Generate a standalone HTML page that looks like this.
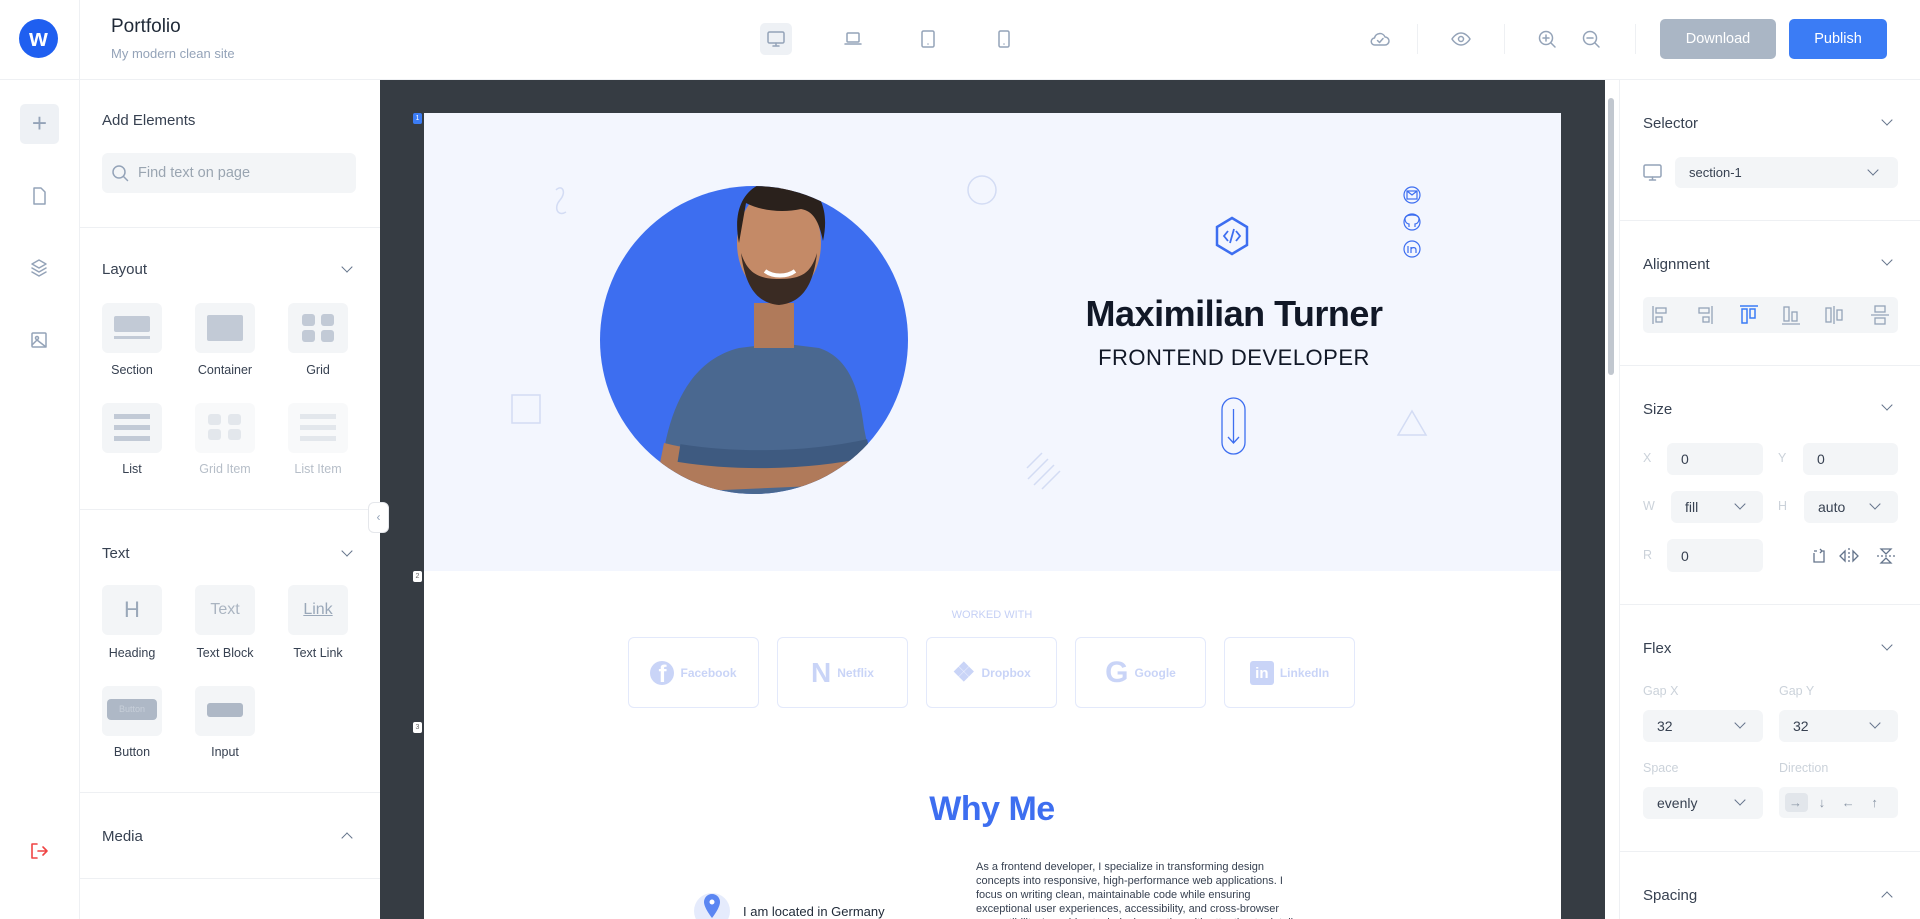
<!DOCTYPE html>
<html><head><meta charset="utf-8"><style>
*{box-sizing:border-box;margin:0;padding:0}
body{width:1920px;height:919px;overflow:hidden;background:#fff;font-family:"Liberation Sans",sans-serif;color:#1f2937;position:relative}
.a{position:absolute}
.ic{fill:none;stroke:#94a3b8;stroke-width:1.5;stroke-linecap:round;stroke-linejoin:round}
.h{font-size:15px;color:#374151}
.tile{position:absolute;width:60px;height:50px;background:#f3f5f7;border-radius:6px}
.lbl{position:absolute;width:90px;text-align:center;font-size:12.5px;color:#374151}
.sep{position:absolute;height:1px;background:#eef0f3}
.box{position:absolute;background:#f3f5f7;border-radius:6px;font-size:14px;color:#374151;padding-left:14px;display:flex;align-items:center}
.chev{position:absolute;width:8px;height:8px;border-right:1.5px solid #64748b;border-bottom:1.5px solid #64748b;transform:rotate(45deg)}
.chevu{position:absolute;width:8px;height:8px;border-left:1.5px solid #64748b;border-top:1.5px solid #64748b;transform:rotate(45deg)}
.fl{position:absolute;font-size:12.5px;color:#cbd2da}
.card{position:absolute;top:524px;width:131px;height:71px;border:1px solid #e3e9fb;border-radius:6px;display:flex;align-items:center;justify-content:center;gap:6px;color:#c9d4f7;font-size:12px;font-weight:bold}
</style></head><body>

<!-- header -->
<div class="a" style="left:0;top:79px;width:1920px;height:1px;background:#eef0f3"></div>
<div class="a" style="left:79px;top:0;width:1px;height:919px;background:#eef0f3"></div>
<div class="a" style="left:19px;top:19px;width:39px;height:39px;border-radius:50%;background:#1f5ff0;color:#fff;font-weight:bold;font-size:24px;text-align:center;line-height:39px">w</div>
<div class="a" style="left:111px;top:16px;font-size:19px;color:#1f2937">Portfolio</div>
<div class="a" style="left:111px;top:46px;font-size:13px;color:#94a3b8">My modern clean site</div>
<div class="a" style="left:760px;top:23px;width:32px;height:32px;background:#eef1f5;border-radius:5px"></div>
<svg class="a" style="left:766px;top:29px" width="20" height="20" viewBox="0 0 20 20"><rect class="ic" x="2" y="3" width="16" height="11" rx="1.5"/><path class="ic" d="M10 14v3M7 17h6"/></svg>
<svg class="a" style="left:843px;top:29px" width="20" height="20" viewBox="0 0 20 20"><rect class="ic" x="4" y="4" width="12" height="9" rx="1"/><path class="ic" d="M2 15h16"/></svg>
<svg class="a" style="left:918px;top:29px" width="20" height="20" viewBox="0 0 20 20"><rect class="ic" x="4" y="2" width="12" height="16" rx="1.5"/><path class="ic" d="M10 15h.01"/></svg>
<svg class="a" style="left:994px;top:29px" width="20" height="20" viewBox="0 0 20 20"><rect class="ic" x="5" y="2" width="10" height="16" rx="1.5"/><path class="ic" d="M10 15h.01"/></svg>
<svg class="a" style="left:1369px;top:28px" width="22" height="22" viewBox="0 0 22 22"><path class="ic" d="M6 17h10a4 4 0 0 0 0-8 5.5 5.5 0 0 0-10.5 1A3.5 3.5 0 0 0 6 17z"/><path class="ic" d="M8.5 12.5l2 2 3.5-4"/></svg>
<div class="a" style="left:1417px;top:24px;width:1px;height:30px;background:#eef0f3"></div>
<svg class="a" style="left:1450px;top:28px" width="22" height="22" viewBox="0 0 22 22"><path class="ic" d="M2 11s3.5-6 9-6 9 6 9 6-3.5 6-9 6-9-6-9-6z"/><circle class="ic" cx="11" cy="11" r="2.5"/></svg>
<div class="a" style="left:1504px;top:24px;width:1px;height:30px;background:#eef0f3"></div>
<svg class="a" style="left:1536px;top:28px" width="22" height="22" viewBox="0 0 22 22"><circle class="ic" cx="10" cy="10" r="6.5"/><path class="ic" d="M15 15l4 4M10 7v6M7 10h6"/></svg>
<svg class="a" style="left:1580px;top:28px" width="22" height="22" viewBox="0 0 22 22"><circle class="ic" cx="10" cy="10" r="6.5"/><path class="ic" d="M15 15l4 4M7 10h6"/></svg>
<div class="a" style="left:1635px;top:24px;width:1px;height:30px;background:#eef0f3"></div>
<div class="a" style="left:1660px;top:19px;width:116px;height:40px;background:#aab6c5;border-radius:5px;color:#fff;font-size:14.5px;text-align:center;line-height:40px">Download</div>
<div class="a" style="left:1789px;top:19px;width:98px;height:40px;background:#3b7cf5;border-radius:5px;color:#fff;font-size:14.5px;text-align:center;line-height:40px">Publish</div>

<!-- left rail -->
<div class="a" style="left:5px;top:79px;width:65px;height:1px;background:#eef0f3"></div>
<div class="a" style="left:20px;top:104px;width:39px;height:40px;background:#eef1f5;border-radius:5px;color:#94a3b8;font-size:26px;text-align:center;line-height:38px;font-weight:300">+</div>
<svg class="a" style="left:29px;top:186px" width="20" height="20" viewBox="0 0 20 20"><path class="ic" d="M5 2h7l4 4v12H5z"/></svg>
<svg class="a" style="left:29px;top:258px" width="20" height="20" viewBox="0 0 20 20"><path class="ic" d="M10 2l7 4-7 4-7-4zM3 10l7 4 7-4M3 14l7 4 7-4"/></svg>
<svg class="a" style="left:29px;top:330px" width="20" height="20" viewBox="0 0 20 20"><rect class="ic" x="3" y="3" width="14" height="14" rx="1"/><circle class="ic" cx="8" cy="8" r="1.5"/><path class="ic" d="M3 15l5-5 9 7"/></svg>
<svg class="a" style="left:29px;top:841px" width="20" height="20" viewBox="0 0 20 20"><path d="M8 3H3v14h5M9 10h9M14 6l4 4-4 4" fill="none" stroke="#ef4444" stroke-width="1.6" stroke-linecap="round" stroke-linejoin="round"/></svg>

<!-- left panel -->
<div class="a h" style="left:102px;top:112px">Add Elements</div>
<div class="a" style="left:102px;top:153px;width:254px;height:40px;background:#f3f5f7;border-radius:6px"></div>
<svg class="a" style="left:110px;top:163px" width="20" height="20" viewBox="0 0 20 20"><circle class="ic" cx="9" cy="9" r="6"/><path class="ic" d="M13.5 13.5l4 4"/></svg>
<div class="a" style="left:138px;top:165px;font-size:14.5px;color:#9aa5b1">Find text on page</div>
<div class="sep" style="left:80px;top:227px;width:300px"></div>
<div class="a h" style="left:102px;top:261px">Layout</div><div class="chev" style="left:343px;top:263px"></div>
<div class="tile" style="left:102px;top:303px"></div><div class="tile" style="left:195px;top:303px"></div><div class="tile" style="left:288px;top:303px"></div>
<div class="a" style="left:114px;top:316px;width:36px;height:16px;background:#c2cad6;border-radius:2px"></div><div class="a" style="left:114px;top:336px;width:36px;height:3px;background:#c2cad6"></div>
<div class="a" style="left:207px;top:315px;width:36px;height:26px;background:#c2cad6;border-radius:2px"></div>
<div class="a" style="left:302px;top:314px;width:13px;height:12px;background:#c2cad6;border-radius:3px"></div><div class="a" style="left:321px;top:314px;width:13px;height:12px;background:#c2cad6;border-radius:3px"></div><div class="a" style="left:302px;top:330px;width:13px;height:12px;background:#c2cad6;border-radius:3px"></div><div class="a" style="left:321px;top:330px;width:13px;height:12px;background:#c2cad6;border-radius:3px"></div>
<div class="lbl" style="left:87px;top:363px">Section</div><div class="lbl" style="left:180px;top:363px">Container</div><div class="lbl" style="left:273px;top:363px">Grid</div>
<div class="tile" style="left:102px;top:403px"></div><div class="tile" style="left:195px;top:403px;background:#f8f9fa"></div><div class="tile" style="left:288px;top:403px;background:#f8f9fa"></div>
<div class="a" style="left:114px;top:414px;width:36px;height:5px;background:#c2cad6;box-shadow:0 11px 0 #c2cad6,0 22px 0 #c2cad6"></div>
<div class="a" style="left:208px;top:414px;width:13px;height:11px;background:#e3e7ec;border-radius:3px;box-shadow:20px 0 0 #e3e7ec,0 15px 0 #e3e7ec,20px 15px 0 #e3e7ec"></div>
<div class="a" style="left:300px;top:414px;width:36px;height:5px;background:#e3e7ec;box-shadow:0 11px 0 #e3e7ec,0 22px 0 #e3e7ec"></div>
<div class="lbl" style="left:87px;top:462px">List</div><div class="lbl" style="left:180px;top:462px;color:#b6bec8">Grid Item</div><div class="lbl" style="left:273px;top:462px;color:#b6bec8">List Item</div>
<div class="sep" style="left:80px;top:509px;width:300px"></div>
<div class="a h" style="left:102px;top:545px">Text</div><div class="chev" style="left:343px;top:547px"></div>
<div class="tile" style="left:102px;top:585px;text-align:center;line-height:50px;font-size:22px;color:#9aa8b9">H</div>
<div class="tile" style="left:195px;top:585px;text-align:center;line-height:50px;font-size:16px;color:#aab4c1">Text</div>
<div class="tile" style="left:288px;top:585px;text-align:center;line-height:50px;font-size:16px;color:#9aa8b9;text-decoration:underline">Link</div>
<div class="lbl" style="left:87px;top:646px">Heading</div><div class="lbl" style="left:180px;top:646px">Text Block</div><div class="lbl" style="left:273px;top:646px">Text Link</div>
<div class="tile" style="left:102px;top:686px"></div><div class="tile" style="left:195px;top:686px"></div>
<div class="a" style="left:107px;top:699px;width:50px;height:21px;background:#aeb8c6;border-radius:4px;font-size:9px;color:#c7cfd9;text-align:center;line-height:21px">Button</div>
<div class="a" style="left:207px;top:703px;width:36px;height:14px;background:#aeb8c6;border-radius:3px"></div>
<div class="lbl" style="left:87px;top:745px">Button</div><div class="lbl" style="left:180px;top:745px">Input</div>
<div class="sep" style="left:80px;top:792px;width:300px"></div>
<div class="a h" style="left:102px;top:828px">Media</div><div class="chevu" style="left:343px;top:834px"></div>
<div class="sep" style="left:80px;top:878px;width:300px"></div>

<!-- canvas -->
<div class="a" style="left:380px;top:80px;width:1225px;height:839px;background:#363c43"></div>
<div class="a" style="left:1605px;top:80px;width:15px;height:839px;background:#fff"></div>
<div class="a" style="left:1608px;top:98px;width:6px;height:277px;background:#c1c7cf;border-radius:3px"></div>
<div class="a" style="left:1619px;top:80px;width:1px;height:839px;background:#eef0f3"></div>
<div class="a" style="left:368px;top:502px;width:21px;height:31px;background:#fff;border-radius:6px;border:1px solid #e5e7eb;color:#94a3b8;font-size:12px;text-align:center;line-height:29px">‹</div>

<div class="a" style="left:424px;top:113px;width:1137px;height:806px;background:#fff;overflow:hidden">
 <div class="a" style="left:0;top:0;width:1137px;height:458px;background:#f3f6fe"></div>
 <svg class="a" style="left:0;top:0" width="1137" height="458">
  <path d="M132 77c6-6 11 2 4 10s-2 17 6 12" fill="none" stroke="#d3dcf4" stroke-width="1.5"/>
  <circle cx="558" cy="77" r="14" fill="none" stroke="#d3dcf4" stroke-width="1.5"/>
  <rect x="88" y="282" width="28" height="28" fill="none" stroke="#d3dcf4" stroke-width="1.5"/>
  <path d="M618 340l-15 15M624 346l-20 20M630 352l-20 20M636 358l-18 18" stroke="#d3dcf4" stroke-width="1.5"/>
  <path d="M988 298l14 24h-28z" fill="none" stroke="#d3dcf4" stroke-width="1.5"/>
  <defs><clipPath id="c"><circle cx="330" cy="227" r="154"/></clipPath></defs>
  <circle cx="330" cy="227" r="154" fill="#3d6ef0"/>
  <g clip-path="url(#c)">
   <path d="M235 400c0-80 20-150 80-165l40-5 40 5c30 10 40 40 45 80l20 100z" fill="#4a6890"/>
   <path d="M240 330c40 10 120 20 200 0l20 40-230 10z" fill="#b07a5a"/>
   <path d="M255 340c50 8 120 10 190-5" stroke="#3e5a80" stroke-width="18" fill="none"/>
   <rect x="330" y="190" width="40" height="45" fill="#b07a5a"/>
   <ellipse cx="355" cy="130" rx="42" ry="55" fill="#c48a67"/>
   <path d="M315 130c-8-40 10-62 42-64 35 0 50 25 42 62-4-20-10-30-22-32-18 4-40 2-55-6z" fill="#2a211c"/>
   <path d="M317 140c5 40 20 50 38 52 20-2 34-15 38-52-6 20-15 26-38 26s-32-8-38-26z" fill="#3a2b23"/>
   <path d="M341 158c8 6 22 6 30 0" stroke="#fff" stroke-width="4" fill="none"/>
  </g>
  <path d="M808 105l15 9v18l-15 9-15-9v-18z" fill="none" stroke="#3d6ef0" stroke-width="2.5"/>
  <path d="M804 118l-4 5 4 5M812 118l4 5-4 5M810 116l-4 14" fill="none" stroke="#3d6ef0" stroke-width="1.8"/>
  <g fill="none" stroke="#3d6ef0" stroke-width="1.2">
   <circle cx="988" cy="82" r="8"/><rect x="983" y="78" width="10" height="8"/><path d="M983 78l5 4 5-4"/>
   <circle cx="988" cy="109" r="8"/><path d="M985 114v-3c-2 0-4-2-4-5 0-3 3-4 7-4s7 1 7 4c0 3-2 5-4 5v3"/>
   <circle cx="988" cy="136" r="8"/><path d="M984 133v7M987 140v-6M987 136c1-2 5-2 5 1v3"/>
  </g>
  <rect x="798" y="285" width="23" height="56" rx="11.5" fill="none" stroke="#3d6ef0" stroke-width="1.3"/>
  <path d="M809.5 296v34M804 324l5.5 6 5.5-6" fill="none" stroke="#3d6ef0" stroke-width="1.3"/>
 </svg>
 <div class="a" style="left:610px;top:180px;width:400px;text-align:center;font-size:36px;font-weight:bold;color:#111827;letter-spacing:-0.5px">Maximilian Turner</div>
 <div class="a" style="left:610px;top:232px;width:400px;text-align:center;font-size:22px;color:#111827;letter-spacing:0.5px">FRONTEND DEVELOPER</div>
 <div class="a" style="left:468px;top:496px;width:200px;text-align:center;font-size:11px;color:#c5d0f5">WORKED WITH</div>
 <div class="card" style="left:204px"><span style="font-size:24px;width:24px;height:24px;border-radius:50%;background:#c9d4f7;color:#fff;line-height:28px;text-align:center">f</span>Facebook</div>
 <div class="card" style="left:353px"><span style="font-size:28px;font-weight:900">N</span>Netflix</div>
 <div class="card" style="left:502px"><span style="font-size:26px">❖</span>Dropbox</div>
 <div class="card" style="left:651px"><span style="font-size:30px;font-weight:900">G</span>Google</div>
 <div class="card" style="left:800px"><span style="width:24px;height:24px;background:#c9d4f7;color:#fff;font-size:15px;text-align:center;line-height:26px;border-radius:3px">in</span>LinkedIn</div>
 <div class="a" style="left:468px;top:677px;width:200px;text-align:center;font-size:34px;font-weight:bold;color:#3d6ef0;letter-spacing:-0.5px">Why Me</div>
 <div class="a" style="left:270px;top:780px;width:36px;height:36px;border-radius:50%;background:#e5ebfc"></div>
 <svg class="a" style="left:278px;top:780px" width="20" height="28" viewBox="0 0 20 28"><path d="M10 1C5 1 2 5 2 9c0 6 8 16 8 16s8-10 8-16c0-4-3-8-8-8z" fill="#5b86f2"/><circle cx="10" cy="9" r="2.5" fill="#fff"/></svg>
 <div class="a" style="left:319px;top:791px;font-size:13px;color:#1f2937">I am located in Germany</div>
 <div class="a" style="left:552px;top:747px;width:320px;font-size:11px;line-height:14px;color:#374151">As a frontend developer, I specialize in transforming design concepts into responsive, high-performance web applications. I focus on writing clean, maintainable code while ensuring exceptional user experiences, accessibility, and cross-browser compatibility. I combine technical expertise with attention to detail</div>
</div>
<div class="a" style="left:413px;top:113px;width:9px;height:11px;background:#3b7cf5;border-radius:2px;font-size:7px;color:#fff;text-align:center;line-height:11px">1</div>
<div class="a" style="left:413px;top:571px;width:9px;height:11px;background:#fff;border-radius:2px;font-size:7px;color:#666;text-align:center;line-height:11px">2</div>
<div class="a" style="left:413px;top:722px;width:9px;height:11px;background:#fff;border-radius:2px;font-size:7px;color:#666;text-align:center;line-height:11px">3</div>

<!-- right panel -->
<div class="a h" style="left:1643px;top:115px">Selector</div><div class="chev" style="left:1883px;top:116px"></div>
<svg class="a" style="left:1642px;top:162px" width="22" height="22" viewBox="0 0 22 22"><rect class="ic" x="2" y="3" width="17" height="12" rx="1.5"/><path class="ic" d="M10.5 15v3M7.5 18h6"/></svg>
<div class="box" style="left:1675px;top:157px;width:223px;height:31px;font-size:13px">section-1</div><div class="chev" style="left:1869px;top:166px"></div>
<div class="sep" style="left:1620px;top:220px;width:300px"></div>
<div class="a h" style="left:1643px;top:256px">Alignment</div><div class="chev" style="left:1883px;top:256px"></div>
<div class="a" style="left:1643px;top:297px;width:255px;height:36px;background:#f3f5f7;border-radius:5px"></div>
<svg class="a" style="left:1643px;top:297px" width="255" height="36" viewBox="0 0 255 36">
 <g fill="none" stroke="#94a3b8" stroke-width="1.3">
  <path d="M10 9v18"/><rect x="13" y="11" width="10" height="5"/><rect x="13" y="20" width="6" height="5"/>
  <path d="M69 9v18"/><rect x="56" y="11" width="10" height="5"/><rect x="60" y="20" width="6" height="5"/>
  <path d="M139 27h18"/><rect x="141" y="10" width="5" height="14"/><rect x="149" y="15" width="5" height="9"/>
  <path d="M191 9v18"/><rect x="183" y="11" width="5" height="14"/><rect x="194" y="13" width="5" height="10"/>
  <path d="M228 18h18"/><rect x="232" y="9" width="10" height="6"/><rect x="232" y="21" width="10" height="6"/>
 </g>
 <g fill="none" stroke="#3b7cf5" stroke-width="1.5"><path d="M97 9h18"/><rect x="99" y="12" width="5" height="14"/><rect x="107" y="12" width="5" height="9"/></g>
</svg>
<div class="sep" style="left:1620px;top:365px;width:300px"></div>
<div class="a h" style="left:1643px;top:401px">Size</div><div class="chev" style="left:1883px;top:401px"></div>
<div class="fl" style="left:1643px;top:451px">X</div><div class="box" style="left:1667px;top:443px;width:96px;height:32px">0</div>
<div class="fl" style="left:1778px;top:451px">Y</div><div class="box" style="left:1803px;top:443px;width:95px;height:32px">0</div>
<div class="fl" style="left:1643px;top:499px">W</div><div class="box" style="left:1671px;top:491px;width:92px;height:32px">fill</div><div class="chev" style="left:1736px;top:500px"></div>
<div class="fl" style="left:1778px;top:499px">H</div><div class="box" style="left:1804px;top:491px;width:94px;height:32px">auto</div><div class="chev" style="left:1871px;top:500px"></div>
<div class="fl" style="left:1643px;top:548px">R</div><div class="box" style="left:1667px;top:539px;width:96px;height:33px">0</div>
<svg class="a" style="left:1810px;top:546px" width="90" height="20" viewBox="0 0 90 20"><g fill="none" stroke="#64748b" stroke-width="1.3"><path d="M4 5h3M10 3l2 2-2 2M12 5h2v11H4V7"/><path d="M39 2v16" stroke-dasharray="2 2"/><path d="M35 5l-5 5 5 5zM43 5l5 5-5 5z"/><path d="M67 10h18" stroke-dasharray="2 2"/><path d="M71 3h10l-5 5zM71 17h10l-5-5z"/></g></svg>
<div class="sep" style="left:1620px;top:604px;width:300px"></div>
<div class="a h" style="left:1643px;top:640px">Flex</div><div class="chev" style="left:1883px;top:641px"></div>
<div class="fl" style="left:1643px;top:684px">Gap X</div><div class="fl" style="left:1779px;top:684px">Gap Y</div>
<div class="box" style="left:1643px;top:710px;width:120px;height:32px">32</div><div class="chev" style="left:1736px;top:719px"></div>
<div class="box" style="left:1779px;top:710px;width:119px;height:32px">32</div><div class="chev" style="left:1871px;top:719px"></div>
<div class="fl" style="left:1643px;top:761px">Space</div><div class="fl" style="left:1779px;top:761px">Direction</div>
<div class="box" style="left:1643px;top:787px;width:120px;height:32px">evenly</div><div class="chev" style="left:1736px;top:796px"></div>
<div class="a" style="left:1779px;top:787px;width:119px;height:31px;background:#f3f5f7;border-radius:5px"></div>
<div class="a" style="left:1785px;top:793px;width:23px;height:19px;background:#e2e6eb;border-radius:4px"></div>
<div class="a" style="left:1789px;top:793px;width:110px;font-size:13px;color:#8a96a6;word-spacing:13px;line-height:19px">→ ↓ ← ↑</div>
<div class="sep" style="left:1620px;top:851px;width:300px"></div>
<div class="a h" style="left:1643px;top:887px">Spacing</div><div class="chevu" style="left:1883px;top:893px"></div>
</body></html>
